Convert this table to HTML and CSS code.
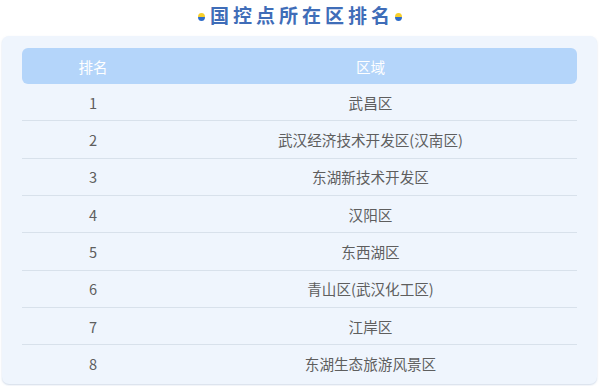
FILE: index.html
```html
<!DOCTYPE html>
<html lang="zh">
<head>
<meta charset="utf-8">
<link rel="stylesheet" href="styles.css">
</head>
<body>
<div class="page">
  <h1 class="title">
    <span class="dot"></span>
    <span class="title-text">国控点所在区排名</span>
    <span class="dot"></span>
  </h1>
  <div class="card">
    <div class="table">
      <div class="row head"><div class="c1">排名</div><div class="c2">区域</div></div>
      <div class="row"><div class="c1">1</div><div class="c2">武昌区</div></div>
      <div class="row"><div class="c1">2</div><div class="c2">武汉经济技术开发区(汉南区)</div></div>
      <div class="row"><div class="c1">3</div><div class="c2">东湖新技术开发区</div></div>
      <div class="row"><div class="c1">4</div><div class="c2">汉阳区</div></div>
      <div class="row"><div class="c1">5</div><div class="c2">东西湖区</div></div>
      <div class="row"><div class="c1">6</div><div class="c2">青山区(武汉化工区)</div></div>
      <div class="row"><div class="c1">7</div><div class="c2">江岸区</div></div>
      <div class="row last"><div class="c1">8</div><div class="c2">东湖生态旅游风景区</div></div>
    </div>
  </div>
</div>
</body>
</html>
```

FILE: styles.css
```css
* { box-sizing: border-box; }
html, body { margin: 0; padding: 0; background: #ffffff; }
body {
  font-family: "Noto Sans CJK SC", "Noto Sans", sans-serif;
  width: 600px;
  height: 386px;
  overflow: hidden;
}
.page { display: flex; flex-direction: column; }
.title {
  margin: 0;
  height: 36px;
  display: flex;
  align-items: center;
  justify-content: center;
  gap: 5px;
  padding-bottom: 6px;
}
.title-text {
  font-size: 19px;
  font-weight: 700;
  letter-spacing: 4px;
  margin-right: -4px;
  color: #3f6db8;
  line-height: 24px;
}
.dot {
  width: 7px;
  height: 8px;
  border-radius: 50%;
  background: linear-gradient(#f7cf2b 0 55%, #2f6cc8 55% 100%);
  margin-top: 4px;
}
.card {
  margin: 0 3px 0 2px;
  background: #eff5fd;
  border-radius: 7px;
  box-shadow: 0 1px 2px rgba(120, 150, 190, 0.35);
  padding: 12px 20px 2px 20px;
  height: 348px;
}
.table { display: flex; flex-direction: column; }
.row {
  display: grid;
  grid-template-columns: 142px 1fr;
  height: 37.33px;
  align-items: center;
  border-bottom: 1px solid #d8e1eb;
  font-size: 14.6px;
  color: #5e5e5e;
  text-align: center;
}
.row.head {
  height: 36px;
  background: #b4d5fa;
  color: #ffffff;
  border-radius: 6px;
  border-bottom: none;
}
.row.last { border-bottom: none; }
```
